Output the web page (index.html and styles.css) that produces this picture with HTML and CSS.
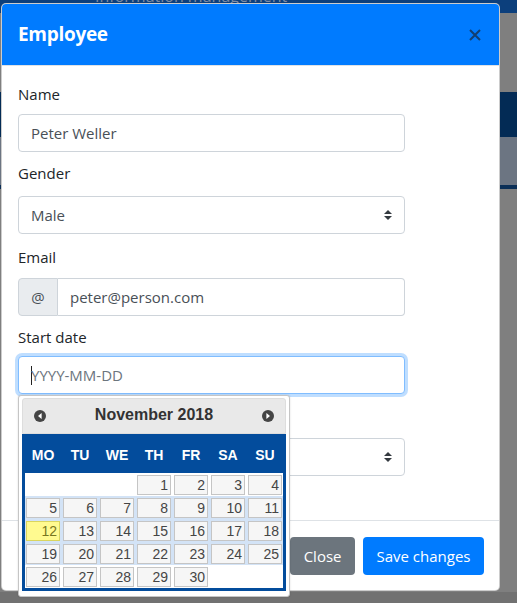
FILE: index.html
```html
<!DOCTYPE html>
<html lang="en">
<head>
<meta charset="utf-8">
<title>Employee</title>
<link rel="stylesheet" href="styles.css">
</head>
<body>
<div class="page">
  <div class="nav"><span class="brand">Information management</span></div>
  <div class="band-gap"></div>
  <div class="band-navy"></div>
  <div class="band-row"></div>
  <div class="band-line"></div>
  <div class="fill"></div>
  <div class="page-foot"></div>
</div>

<div class="modal">
  <div class="modal-header">
    <h5 class="modal-title">Employee</h5>
    <button class="close" type="button" aria-label="Close">
      <svg width="12" height="12" viewBox="0 0 12 12"><path d="M1 1L11 11M11 1L1 11" stroke="#123f70" stroke-width="2" fill="none"/></svg>
    </button>
  </div>
  <div class="modal-body">
    <div class="group g-name">
      <label class="label">Name</label>
      <div class="field">Peter Weller</div>
    </div>
    <div class="group g-gender">
      <label class="label">Gender</label>
      <div class="field select"><span>Male</span>
        <svg width="8" height="10" viewBox="0 0 4 5"><path d="M2 0L0 2h4zm0 5L0 3h4z" fill="#343a40"/></svg>
      </div>
    </div>
    <div class="group g-email">
      <label class="label">Email</label>
      <div class="input-group">
        <span class="addon">@</span>
        <span class="ig-input">peter@person.com</span>
      </div>
    </div>
    <div class="group g-date">
      <label class="label">Start date</label>
      <div class="date-wrap">
        <div class="field focus"><span class="caret"></span><span class="ph">YYYY-MM-DD</span></div>
        <div class="datepicker">
          <div class="dp-header">
            <svg class="dp-nav" width="12" height="12" viewBox="0 0 12 12"><circle cx="6" cy="6" r="6" fill="#454545"/><path d="M7.6 3L4 6l3.6 3z" fill="#fff"/></svg>
            <span class="dp-title">November 2018</span>
            <svg class="dp-nav" width="12" height="12" viewBox="0 0 12 12"><circle cx="6" cy="6" r="6" fill="#454545"/><path d="M4.4 3L8 6l-3.6 3z" fill="#fff"/></svg>
          </div>
          <div class="dp-cal">
            <div class="dp-dow">
              <span>MO</span><span>TU</span><span>WE</span><span>TH</span><span>FR</span><span>SA</span><span>SU</span>
            </div>
            <div class="dp-weeks">
              <div class="week">
                <span class="empty"></span><span class="empty"></span><span class="empty"></span>
                <span class="day">1</span><span class="day">2</span><span class="day">3</span><span class="day">4</span>
              </div>
              <div class="week tint">
                <span class="day">5</span><span class="day">6</span><span class="day">7</span><span class="day">8</span><span class="day">9</span><span class="day">10</span><span class="day">11</span>
              </div>
              <div class="week tint">
                <span class="day today">12</span><span class="day">13</span><span class="day">14</span><span class="day">15</span><span class="day">16</span><span class="day">17</span><span class="day">18</span>
              </div>
              <div class="week tint">
                <span class="day">19</span><span class="day">20</span><span class="day">21</span><span class="day">22</span><span class="day">23</span><span class="day">24</span><span class="day">25</span>
              </div>
              <div class="week">
                <span class="day">26</span><span class="day">27</span><span class="day">28</span><span class="day">29</span><span class="day">30</span>
                <span class="empty"></span><span class="empty"></span>
              </div>
            </div>
          </div>
        </div>
      </div>
    </div>
    <div class="group g-dept">
      <label class="label">Department</label>
      <div class="field select"><span></span>
        <svg width="8" height="10" viewBox="0 0 4 5"><path d="M2 0L0 2h4zm0 5L0 3h4z" fill="#343a40"/></svg>
      </div>
    </div>
  </div>
  <div class="modal-footer">
    <button class="btn btn-secondary" type="button">Close</button>
    <button class="btn btn-primary" type="button">Save changes</button>
  </div>
</div>
</body>
</html>
```

FILE: styles.css
```css
html, body {
  margin: 0;
  padding: 0;
}
body {
  width: 517px;
  height: 603px;
  overflow: hidden;
  position: relative;
  background: #7f7f7f;
  font-family: "Open Sans", "Noto Sans", sans-serif;
  font-size: 15px;
  color: #212529;
}

/* page behind the backdrop */
.page {
  display: flex;
  flex-direction: column;
  height: 100%;
}
.nav {
  height: 13px;
  background: #0c3f7c;
  overflow: hidden;
}
.brand {
  display: block;
  margin: -12px 0 0 95px;
  font-size: 16px;
  line-height: 16px;
  color: #7d8ca6;
  white-space: nowrap;
}
.band-gap { height: 79px; }
.band-navy { height: 45px; background: #032b55; }
.band-row { height: 48px; background: #6c7582; }
.band-line { height: 4px; background: #0b2f57; }
.fill { flex: 1; }
.page-foot { height: 11px; background: #717171; }

/* modal */
.modal {
  position: absolute;
  left: 1px;
  top: 3px;
  width: 499px;
  box-sizing: border-box;
  background: #fff;
  border: 1px solid rgba(0, 0, 0, 0.2);
  border-radius: 5px;
}
.modal-header {
  display: flex;
  align-items: center;
  justify-content: space-between;
  height: 62px;
  box-sizing: border-box;
  padding: 0 16px;
  background: #007bff;
  border-bottom: 1px solid #dee2e6;
  border-radius: 4px 4px 0 0;
}
.modal-title {
  margin: 0;
  font-size: 19px;
  font-weight: 700;
  line-height: 29px;
  letter-spacing: -0.3px;
  color: #fff;
}
.close {
  display: flex;
  padding: 0;
  margin: 0 2px 0 0;
  border: 0;
  background: none;
}

.modal-body {
  padding: 16px 16px 0;
}
.group { margin-bottom: 9px; }
.label {
  display: block;
  line-height: 24px;
  margin-bottom: 8px;
  color: #212529;
}
.g-gender { margin-bottom: 11px; }
.g-gender .label { margin-bottom: 11px; }
.g-email .label { margin-bottom: 9px; }
.g-date { margin-bottom: 10px; }
.g-date .label { margin-bottom: 7px; }
.g-dept { margin-bottom: 44px; }
.g-dept .label { margin-bottom: 10px; }

.field {
  display: flex;
  align-items: center;
  justify-content: space-between;
  width: 387px;
  height: 38px;
  box-sizing: border-box;
  padding: 0 12px;
  border: 1px solid #ced4da;
  border-radius: 4px;
  color: #495057;
  background: #fff;
  line-height: 24px;
}
.field.focus {
  justify-content: flex-start;
  border-color: #80bdff;
  box-shadow: 0 0 0 3px rgba(0, 123, 255, 0.25);
}
.caret {
  display: inline-block;
  width: 1px;
  height: 19px;
  background: #222;
  margin-right: -1px;
}
.ph { color: #6c757d; }

.input-group {
  display: flex;
  width: 387px;
  height: 38px;
}
.addon {
  display: flex;
  align-items: center;
  justify-content: center;
  width: 40px;
  box-sizing: border-box;
  background: #e9ecef;
  border: 1px solid #ced4da;
  border-radius: 4px 0 0 4px;
  color: #495057;
}
.ig-input {
  flex: 1;
  display: flex;
  align-items: center;
  padding: 0 12px;
  border: 1px solid #ced4da;
  border-left: 0;
  border-radius: 0 4px 4px 0;
  color: #495057;
}

/* datepicker */
.date-wrap {
  position: relative;
  width: 387px;
}
.datepicker {
  position: absolute;
  left: 0;
  top: calc(100% + 1px);
  z-index: 10;
  width: 272px;
  box-sizing: border-box;
  padding: 2px 3px 5px;
  background: #fff;
  border: 1px solid #c5c5c5;
  border-radius: 3px;
  box-shadow: 0 0 2px rgba(0, 0, 0, 0.15);
  font-family: "Liberation Sans", Arial, sans-serif;
}
.dp-header {
  display: flex;
  align-items: center;
  justify-content: space-between;
  height: 36px;
  box-sizing: border-box;
  padding: 0 11px 0 11px;
  background: #e9e9e9;
  border: 1px solid #dddddd;
  border-radius: 3px 3px 0 0;
}
.dp-title {
  font-size: 16px;
  font-weight: 700;
  color: #333;
  line-height: 32px;
  padding-bottom: 2px;
}
.dp-cal {
  background: #034c9c;
  padding: 0 3px 3px;
}
.dp-dow {
  display: grid;
  grid-template-columns: repeat(7, 1fr);
  column-gap: 3px;
  height: 35px;
  padding: 4px 1px 0;
  font-size: 14px;
  font-weight: 700;
  line-height: 35px;
  color: #fff;
  text-align: center;
}
.dp-weeks { background: #fff; }
.week {
  display: grid;
  grid-template-columns: repeat(7, 1fr);
  column-gap: 3px;
  padding: 1.5px 1px;
}
.week.tint { background: #d3e3f6; }
.day, .empty {
  height: 20px;
  box-sizing: border-box;
}
.day {
  border: 1px solid #c5c5c5;
  background: #f6f6f6;
  color: #454545;
  font-size: 14px;
  line-height: 18px;
  text-align: right;
  padding-right: 2px;
}
.day.today {
  background: #fffa90;
  border-color: #dad55e;
  color: #777620;
}

/* footer */
.modal-footer {
  display: flex;
  justify-content: flex-end;
  gap: 8px;
  padding: 16px 15px 15px 16px;
  border-top: 1px solid #dee2e6;
}
.btn {
  height: 38px;
  padding: 0 13.5px;
  border: 0;
  border-radius: 4px;
  font-family: "Open Sans", "Noto Sans", sans-serif;
  font-size: 15px;
  line-height: 38px;
  color: #fff;
}
.btn-secondary { background: #6c757d; }
.btn-primary { background: #007bff; }
```
